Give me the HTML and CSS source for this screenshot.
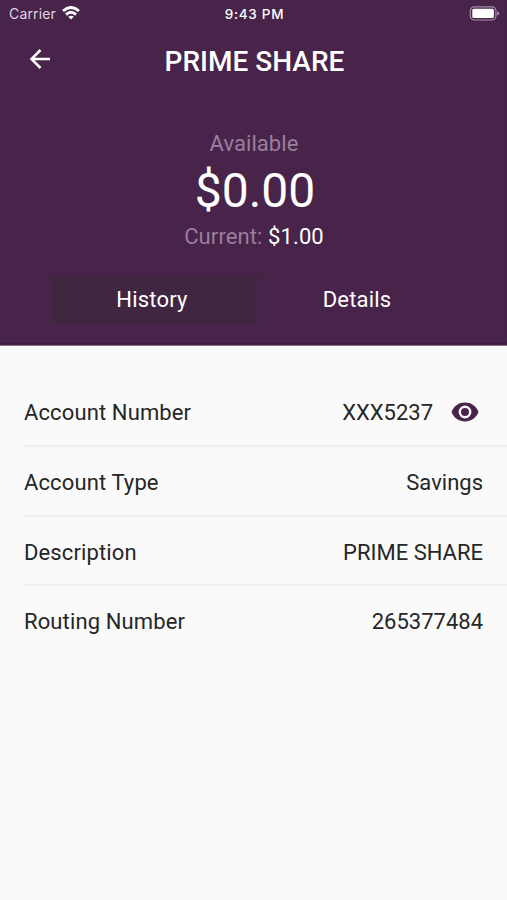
FILE: index.html
```html
<!DOCTYPE html>
<html lang="en">
<head>
<meta charset="utf-8">
<title>Prime Share</title>
<link rel="stylesheet" href="styles.css">
</head>
<body>
<header class="header">
  <div class="status">
    <div class="carrier"><span class="carrier-name">Carrier</span>
      <svg class="wifi" width="18" height="14" viewBox="0 0 18 14" fill="none" stroke="#fff" stroke-width="2.9"><path d="M1 5Q9-2 17 5M4 8.6Q9 4 14 8.6"/><path d="M9 13.6 6.2 10.8Q9 8.8 11.8 10.8Z" fill="#fff" stroke="none"/></svg>
    </div>
    <span class="time">9:43 PM</span>
    <svg class="battery" width="31" height="15" viewBox="0 0 31 15"><rect x="1.3" y=".8" width="25.6" height="13.2" rx="4" fill="none" stroke="#a18da5" stroke-width="1.2"/><rect x="3.3" y="2.8" width="21.6" height="9.2" rx="1.5" fill="#fff"/><path d="M28 5.2Q30.2 6 30.2 7.4T28 9.6Z" fill="#a18da5"/></svg>
  </div>
  <div class="nav">
    <svg class="back" width="32" height="32" viewBox="0 0 32 32" fill="none" stroke="#fff" stroke-width="2.5"><path d="M26 16H8M16.5 7 7.500 16 16.500 25"/></svg>
    <h1 class="title">PRIME SHARE</h1>
    <span></span>
  </div>
  <div class="balance">
    <div class="muted available">Available</div>
    <div class="amount">$0.00</div>
    <div class="current"><span class="muted">Current:</span> <span class="current-value">$1.00</span></div>
  </div>
  <div class="tabs">
    <div class="tab tab-history">History</div>
    <div class="tab tab-details">Details</div>
  </div>
</header>
<main class="rows">
  <div class="row"><span class="label">Account Number</span><span class="value">XXX5237<svg class="eye" width="28" height="20" viewBox="0 0 28 20"><path d="M.5 10C3 3.8 8 .6 14 .6S25 3.8 27.5 10C25 16.2 20 19.4 14 19.4S3 16.2.5 10Z" fill="#48244a"/><circle cx="14" cy="10" r="5.2" fill="#48244a" stroke="#fafafa" stroke-width="2.4"/></svg></span></div>
  <div class="row"><span class="label">Account Type</span><span class="value">Savings</span></div>
  <div class="row"><span class="label">Description</span><span class="value">PRIME SHARE</span></div>
  <div class="row"><span class="label">Routing Number</span><span class="value">265377484</span></div>
</main>
</body>
</html>
```
FILE: styles.css
```css
* { box-sizing: border-box; }
body {
  margin: 0;
  min-height: 900px;
  background: #fafafa;
  color: #262626;
  font: 22px/26px Roboto, sans-serif;
}
.header {
  height: 346px;
  background: #48244a;
  color: #fff;
  border-bottom: 1px solid #8b6d8d;
  box-shadow: inset 0 -2px 1px #3e2041;
}
.status {
  display: grid;
  grid-template-columns: 1fr auto 1fr;
  align-items: center;
  height: 28px;
  padding: 0 7px 0 9px;
  font: 14px/16px Inter, sans-serif;
}
.carrier { display: flex; align-items: center; gap: 6px; color: #dfd5e1; }
.carrier-name { letter-spacing: 0.15px; }
.wifi { margin-top: -2px; }
.time { font-size: 13.5px; font-weight: 500; letter-spacing: 0.7px; }
.battery { justify-self: end; margin-top: -2px; }
.nav {
  display: grid;
  grid-template-columns: 80px 1fr 80px;
  align-items: center;
  height: 66px;
}
.back { margin-left: 24px; margin-top: -4px; }
.title { margin: 2px 0 0 2px; font-size: 28px; line-height: 34px; font-weight: 500; text-align: center; }
.balance { padding: 36px 0 0 1px; text-align: center; }
.muted { color: #9b7e9e; }
.available { padding-top: 1px; letter-spacing: 0.05px; }
.amount { font-size: 48px; line-height: 56px; margin: 6px 0 0 2px; }
.current { margin-top: 5px; letter-spacing: 0.1px; }
.tabs {
  display: grid;
  grid-template-columns: 206px 1fr;
  width: 407px;
  height: 48px;
  margin: 25px auto 0 51px;
  border: 1px solid #41243f;
  border-radius: 3px;
  line-height: 47px;
  text-align: center;
}
.tab { letter-spacing: 0.2px; }
.tab-history { padding-right: 6px; background: #402640; }
.tab-details { padding-right: 1px; }
.rows { padding: 31.4px 0 0 24px; }
.row {
  display: flex;
  justify-content: space-between;
  align-items: center;
  height: 69.7px;
  padding: 4px 24px 0 0;
  border-bottom: 2px solid #efefef;
}
.row:last-child { height: 68px; border: 0; }
.label { letter-spacing: 0.12px; }
.value { display: flex; align-items: center; }
.eye { margin: -3px 4px 0 18px; }
```
